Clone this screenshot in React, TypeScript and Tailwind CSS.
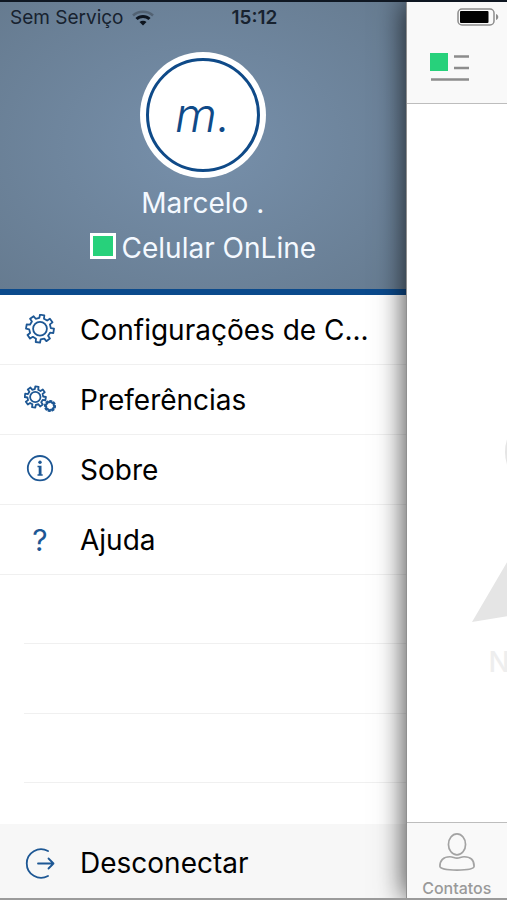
import React from "react";

interface IMenuItem {
  label: string;
  icon: React.ReactNode;
}

// outline of a cog wheel, `inner` and `outer` are the radii of the teeth
const gearPath = (
  cx: number,
  cy: number,
  inner: number,
  outer: number,
  teeth: number
) => {
  const step = (Math.PI * 2) / teeth;
  const offsets = [
    [-0.28, inner],
    [-0.2, outer],
    [0.2, outer],
    [0.28, inner],
  ];
  const points: string[] = [];
  for (let i = 0; i < teeth; i++) {
    offsets.forEach(([offset, radius]) => {
      const angle = step * (i + offset + 0.2);
      points.push(
        `${(cx + Math.sin(angle) * radius).toFixed(2)} ${(
          cy -
          Math.cos(angle) * radius
        ).toFixed(2)}`
      );
    });
  }
  return `M${points.join("L")}Z`;
};

const iconProps = {
  className: "w-8 h-8 shrink-0 text-[#1d5794]",
  viewBox: "0 0 32 32",
  fill: "none",
  stroke: "currentColor",
  strokeWidth: 1.8,
  strokeLinejoin: "round" as const,
  strokeLinecap: "round" as const,
  "aria-hidden": true,
};

const GearIcon = () => (
  <svg {...iconProps}>
    <path d={gearPath(16, 14.7, 10.8, 14, 8)} />
    <circle cx="16" cy="14.7" r="6.9" />
  </svg>
);

const GearsIcon = () => (
  <svg {...iconProps}>
    <path d={gearPath(11.3, 13, 7.9, 10.6, 8)} />
    <circle cx="11.3" cy="13" r="5.2" />
    <path d={gearPath(26, 22, 3.8, 5.2, 8)} />
  </svg>
);

const InfoIcon = () => (
  <svg {...iconProps}>
    <circle cx="16" cy="14.2" r="12.2" />
    <circle cx="16" cy="8.300" r="1.700" fill="currentColor" stroke="none" />
    <path
      d="M13.500 11.800H17.500V20.300H18.700V21.700H13.500V20.300H14.700V13.200H13.500Z"
      fill="currentColor"
      stroke="none"
    />
  </svg>
);

const HelpIcon = () => (
  <span
    aria-hidden="true"
    className="w-8 shrink-0 text-center text-[30px] leading-8 text-[#1d5794]"
  >
    ?
  </span>
);

const LogoutIcon = () => (
  <svg {...iconProps}>
    <path d="M24 4A14.300 14.300 0 1 0 24 29" />
    <path d="M14 16.500H29.500M24.500 11.500L29.500 16.500L24.500 21.500" />
  </svg>
);

const WifiIcon = () => (
  <svg className="w-[22px] h-4" viewBox="0 0 22 16" aria-hidden="true">
    <path
      d="M1 5.500C6.500 0.500 15.500 0.500 21 5.500"
      fill="none"
      stroke="#526273"
      strokeWidth="2.500"
    />
    <path
      d="M4.500 9C8 5.500 14 5.500 17.500 9"
      fill="none"
      stroke="#0d141e"
      strokeWidth="3"
    />
    <path d="M7.500 12C9.500 10.200 12.500 10.200 14.500 12L11 15.500Z" fill="#0d141e" />
  </svg>
);

const BatteryIcon = () => (
  <svg className="w-[42px] h-[18px]" viewBox="0 0 42 18" aria-hidden="true">
    <rect
      x="1"
      y="1"
      width="36"
      height="16"
      rx="4"
      fill="none"
      stroke="#8c8c8c"
      strokeWidth="1.500"
    />
    <rect x="3" y="3" width="28.500" height="12" rx="1" fill="#000" />
    <path d="M39 6C42 7 42 11 39 12Z" fill="#8c8c8c" />
  </svg>
);

const ContactIcon = () => (
  <svg
    className="w-10 h-10"
    viewBox="0 0 40 40"
    fill="none"
    stroke="#a3a3a3"
    strokeWidth="1.800"
    aria-hidden="true"
  >
    <ellipse cx="20" cy="12" rx="9" ry="11" />
    <path d="M12.500 25C16 25 17 26.500 20 26.500C23 26.500 24 25 27.500 25C34.500 25 38 29 38 35C38 37.500 31 39 20 39C9 39 2 37.500 2 35C2 29 5.500 25 12.500 25Z" />
  </svg>
);

const menuItems: IMenuItem[] = [
  { label: "Configurações de C...", icon: <GearIcon /> },
  { label: "Preferências", icon: <GearsIcon /> },
  { label: "Sobre", icon: <InfoIcon /> },
  { label: "Ajuda", icon: <HelpIcon /> },
];

const Drawer = () => (
  <aside className="w-4/5 shrink-0 flex flex-col bg-white">
    <header className="h-[293px] flex flex-col border-b-6 border-[#0b4a8c] bg-radial from-[#7790ab] to-[#667b90]">
      <div className="flex items-center px-2.5 pt-1 text-[19px] leading-6 text-[#17222f]">
        <span>Sem Serviço</span>
        <span className="ml-2">
          <WifiIcon />
        </span>
        <span className="ml-[78px] font-semibold">15:12</span>
      </div>
      <div className="flex flex-col items-center pt-[22px] text-[28px] leading-[45px] text-[#f4f9ff]">
        <div className="w-[126px] h-[126px] rounded-full bg-white p-1.5">
          <div className="w-full h-full rounded-full border-3 border-[#0f4a88] flex items-center justify-center text-[48px] leading-none font-light italic text-[#0f4a88]">
            m.
          </div>
        </div>
        <p className="mt-[3px]">Marcelo .</p>
        <p className="flex items-center gap-1.5">
          <span className="w-[26px] h-[26px] -mt-1.5 border-3 border-white bg-[#27d17b]" />
          Celular OnLine
        </p>
      </div>
    </header>

    <nav>
      <ul>
        {menuItems.map((item) => (
          <li key={item.label} className="border-b border-[#f0f0f0]">
            <button
              type="button"
              className="w-full h-[69px] px-6 flex items-center gap-6 text-left text-[28px] whitespace-nowrap"
            >
              {item.icon}
              {item.label}
            </button>
          </li>
        ))}
      </ul>
      <div className="ml-6" aria-hidden="true">
        <div className="h-[69px] border-b border-[#f0f0f0]" />
        <div className="h-[70px] border-b border-[#f0f0f0]" />
        <div className="h-[69px] border-b border-[#f0f0f0]" />
      </div>
    </nav>

    <button
      type="button"
      className="mt-auto w-full h-[74px] pt-1 px-6 flex items-center gap-6 bg-[#f7f7f7] text-left text-[28px]"
    >
      <LogoutIcon />
      Desconectar
    </button>
  </aside>
);

const MainScreen = () => (
  <main className="relative z-10 flex-1 min-w-0 flex flex-col bg-white border-l border-[#8f8f8f] shadow-[-2px_0_26px_rgba(0,0,0,0.7)]">
    <header className="h-[102px] bg-[#f9f9f9] border-b border-[#bdbdbd]">
      <div className="flex justify-end pt-1.5 pr-2">
        <BatteryIcon />
      </div>
      <button
        type="button"
        aria-label="Menu"
        className="block ml-[23px] mt-6 w-10 h-8"
      >
        <svg viewBox="0 0 40 32" stroke="#8c8c8c" strokeWidth="2.500">
          <rect x="0" y="3" width="18" height="18" fill="#27d17b" stroke="none" />
          <path d="M24 6.500H39M24 18H39M1 29.500H39" />
        </svg>
      </button>
    </header>

    <section className="flex-1 overflow-hidden flex flex-col justify-center pt-[174px]">
      <svg
        className="ml-16 w-[200px] h-[200px] shrink-0"
        viewBox="0 0 200 200"
        fill="#e5e5e5"
        aria-hidden="true"
      >
        <ellipse cx="85" cy="30" rx="51" ry="46" />
        <path d="M1 200L42 130L130 130L170 200L100 184Z" />
      </svg>
      <p className="ml-[82px] mt-6 text-[28px] leading-8 font-medium text-[#eeeeee]">
        N
      </p>
    </section>

    <nav className="h-[76px] bg-[#f9f9f9] border-t border-[#bdbdbd] flex justify-center">
      <button
        type="button"
        className="flex flex-col items-center pt-2.5 text-[16px] leading-5 font-medium text-[#999999]"
      >
        <ContactIcon />
        <span className="mt-[7px]">Contatos</span>
      </button>
    </nav>
  </main>
);

const App = () => {
  return (
    <div className="min-h-screen flex overflow-hidden border-t-2 border-t-[#0f1722] border-b-2 border-b-[#9b9b9b] font-['Inter','Liberation_Sans',sans-serif] text-black">
      <Drawer />
      <MainScreen />
    </div>
  );
};

export default App;
